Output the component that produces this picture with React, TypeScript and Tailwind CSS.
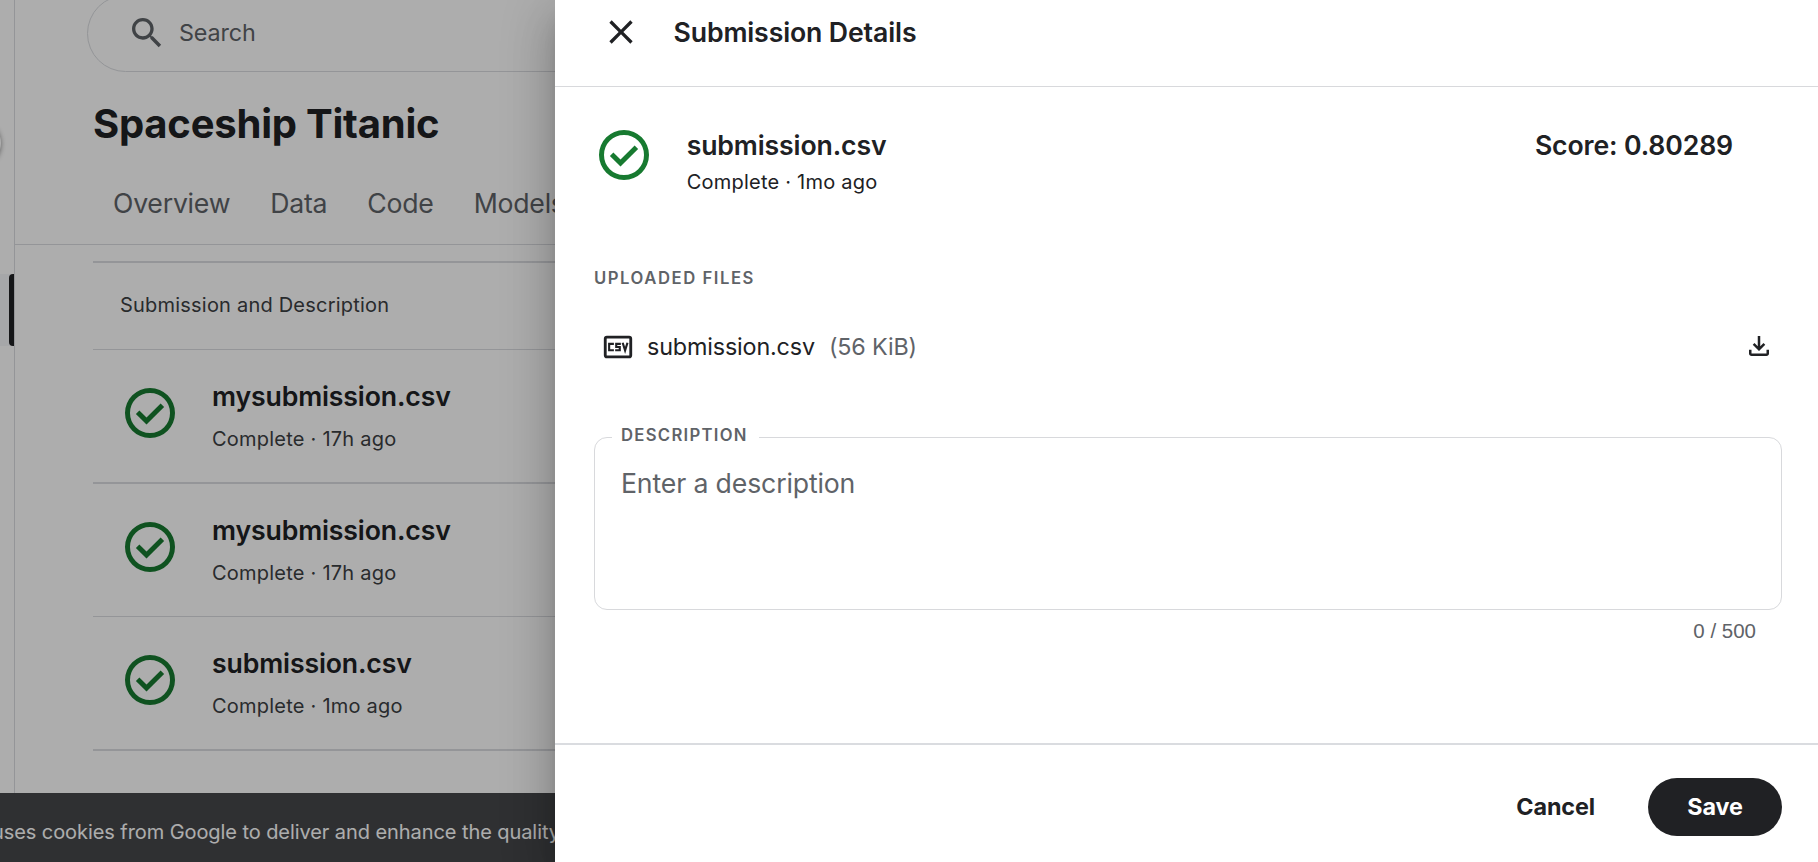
import React from "react";

const CheckCircle = () => (
  <svg viewBox="0 -960 960 960" className="size-[60px] shrink-0 fill-[#177a30]">
    <path d="m424-296 282-282-56-56-226 226-114-114-56 56 170 170Zm56 216q-83 0-156-31.5T197-197q-54-54-85.5-127T80-480q0-83 31.5-156T197-763q54-54 127-85.5T480-880q83 0 156 31.5T763-763q54 54 85.5 127T880-480q0 83-31.5 156T763-197q-54 54-127 85.5T480-80Zm0-80q134 0 227-93t93-227q0-134-93-227t-227-93q-134 0-227 93t-93 227q0 134 93 227t227 93Z" />
  </svg>
);

const TABS = ["Overview", "Data", "Code", "Models"];

const ROWS = [
  { name: "mysubmission.csv", status: "Complete · 17h ago", line: "h-[134px] border-b-2" },
  { name: "mysubmission.csv", status: "Complete · 17h ago", line: "h-[133px] border-b" },
  { name: "submission.csv", status: "Complete · 1mo ago", line: "h-[134px] border-b-2" },
];

function Background() {
  return (
    <div className="flex h-full">
      <aside className="relative w-[15px] shrink-0 border-r border-[#dadce0]">
        <div className="absolute -left-[47px] top-[119px] size-12 rounded-full bg-white shadow-[0_1px_5px_rgba(0,0,0,0.45)]" />
        <div className="absolute left-0 top-[274px] flex h-[72px] w-[14px] justify-end bg-[#f5f7fa]">
          <div className="w-[5px] rounded-l-[4px] bg-[#202124]" />
        </div>
      </aside>
      <main className="min-w-0 flex-1">
        <header className="flex h-[245px] flex-col border-b border-[#dadce0]">
          <div className="-mt-[5px] ml-[72px] flex h-[77px] w-[1600px] shrink-0 items-center rounded-full border border-[#dadce0] pb-[1px] pl-[38.5px]">
            <svg viewBox="0 0 24 24" className="mb-[1px] size-10 fill-[#5f6368]">
              <path d="M15.5 14h-.79l-.28-.27C15.41 12.59 16 11.11 16 9.5 16 5.91 13.09 3 9.5 3S3 5.91 3 9.5 5.91 16 9.5 16c1.61 0 3.09-.59 4.23-1.57l.27.28v.79l5 4.99L20.49 19l-4.99-5zm-6 0C7.01 14 5 11.99 5 9.5S7.01 5 9.5 5 14 7.01 14 9.5 11.99 14 9.5 14z" />
            </svg>
            <span className="ml-[12.5px] text-[23.33px] tracking-[-0.12px] text-[#5f6368]">Search</span>
          </div>
          <h1 className="ml-[78px] mt-[28px] text-[40px] font-bold leading-[48px] tracking-[-0.22px] text-[#202124]">
            Spaceship Titanic
          </h1>
          <nav className="ml-[98px] mt-[14px] flex h-[82px] items-center gap-10 text-[26.67px] tracking-[-0.24px] text-[#5f6368]">
            {TABS.map((t) => (
              <span key={t}>{t}</span>
            ))}
          </nav>
        </header>
        <section className="ml-[78px] mt-4 border-t-2 border-[#dadce0]">
          <div className="flex h-[87px] items-center border-b border-[#dadce0] pb-[3px] pl-[27px] text-[20px] tracking-[0.21px] text-[#3c4043]">
            Submission and Description
          </div>
          {ROWS.map((r, i) => (
            <div key={i} className={`flex border-[#dadce0] pl-[27px] ${r.line}`}>
              <div className="pt-[33px]">
                <CheckCircle />
              </div>
              <div className="ml-8 flex flex-col pt-[30px]">
                <span className="text-[26.67px] font-semibold leading-8 tracking-[-0.14px] text-[#202124]">{r.name}</span>
                <span className="mt-[15px] text-[20px] leading-6 tracking-[0.23px] text-[#3c4043]">{r.status}</span>
              </div>
            </div>
          ))}
        </section>
      </main>
      <div className="absolute bottom-0 left-0 flex h-[69px] w-full items-center overflow-hidden whitespace-nowrap bg-[#46484b] pt-2 text-[20px] tracking-[-0.075px] text-white">
        <span className="-ml-[8px]">uses cookies from Google to deliver and enhance the quality of its services and to analyze traffic.</span>
      </div>
    </div>
  );
}

function Drawer() {
  return (
    <div className="absolute inset-y-0 right-0 flex w-[1263px] flex-col bg-white text-[#202124] shadow-[0_13px_17px_-8px_rgba(0,0,0,0.2),0_27px_40px_3px_rgba(0,0,0,0.14),0_10px_50px_8px_rgba(0,0,0,0.12)]">
      <header className="flex h-[87px] shrink-0 items-center border-b border-[#d8d9dc] pb-[22px] pl-[46px]">
        <svg viewBox="0 0 24 24" className="size-10 fill-[#202124]">
          <path d="M19 6.41 17.59 5 12 10.59 6.41 5 5 6.41 10.59 12 5 17.59 6.41 19 12 13.41 17.59 19 19 17.59 13.41 12z" />
        </svg>
        <h2 className="ml-[32.5px] text-[26.67px] font-semibold tracking-[-0.13px]">Submission Details</h2>
      </header>
      <div className="flex min-h-0 flex-1 flex-col pl-[39px] pr-9">
        <div className="flex h-[175px] pt-[38px]">
          <CheckCircle />
          <div className="ml-[32.7px] flex flex-1 flex-col pt-[4px]">
            <span className="text-[26.67px] font-semibold leading-8 tracking-[-0.14px]">submission.csv</span>
            <span className="mt-[9px] text-[20px] leading-6 tracking-[0.23px]">Complete · 1mo ago</span>
          </div>
          <span className="mr-[49px] pt-[4px] text-[26.67px] font-semibold leading-8 tracking-[-0.14px]">Score: 0.80289</span>
        </div>
        <div className="mt-[6px] text-[16.67px] font-semibold leading-5 tracking-[1.55px] text-[#5f6368]">UPLOADED FILES</div>
        <div className="mt-[29px] flex h-[60px] items-center pl-[6.5px] text-[23.33px] tracking-[-0.15px]">
          <svg viewBox="0 0 24 24" className="size-[34px] text-[#202124]" fill="none" stroke="currentColor">
            <rect x="3" y="5" width="18" height="14" rx="1.2" strokeWidth="2" />
            <path strokeWidth="1.5" d="M9.1 9.75H5.75v4.5H9.1M14 9.75h-3.25V12h2.5v2.25H10M15.3 9l1.7 5.4L18.7 9" />
          </svg>
          <span className="ml-[12.5px]">submission.csv</span>
          <span className="ml-[14px] text-[#5f6368]">(56 KiB)</span>
          <svg viewBox="0 -960 960 960" className="mb-[2px] ml-auto mr-[8px] size-[30px] fill-[#202124]">
            <path d="M480-320 280-520l56-58 104 104v-326h80v326l104-104 56 58-200 200ZM240-160q-33 0-56.5-23.5T160-240v-120h80v120h480v-120h80v120q0 33-23.5 56.5T720-160H240Z" />
          </svg>
        </div>
        <div className="relative mt-[60px] h-[173px] shrink-0 rounded-[13px] border border-[#d8d9dc] px-[26px] pt-[29px] text-[26.67px] leading-8 tracking-[-0.15px] text-[#5f6368]">
          <span className="absolute -top-[13px] left-[17px] h-5 w-[147px] bg-white pl-[9px] text-[16.67px] font-semibold leading-5 tracking-[1.3px]">
            DESCRIPTION
          </span>
          Enter a description
        </div>
        <div className="mr-[26px] mt-[7px] text-right font-['Liberation_Sans',sans-serif] text-[20.5px] leading-7 text-[#5f6368]">0 / 500</div>
      </div>
      <footer className="flex h-[119px] shrink-0 items-center justify-end gap-[53px] border-t-2 border-[#dadce0] pb-[26px] pr-9 pt-[33px] text-[23.33px] font-bold tracking-[-0.1px]">
        <span>Cancel</span>
        <span className="flex h-[58px] w-[134px] items-center justify-center rounded-full bg-[#202124] text-white">Save</span>
      </footer>
    </div>
  );
}

export default function App() {
  return (
    <div className="relative h-[862px] w-[1818px] overflow-hidden bg-white font-[Inter,sans-serif]">
      <Background />
      <div className="absolute inset-0 bg-black/[0.32]" />
      <Drawer />
    </div>
  );
}
